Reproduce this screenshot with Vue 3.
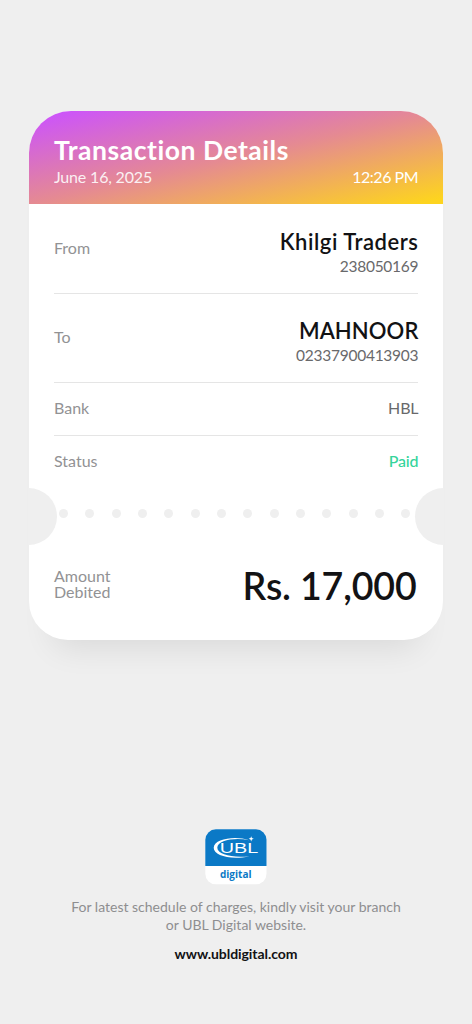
<script setup>
const parties = [
  { label: 'From', name: 'Khilgi Traders', account: '238050169', key: 'from' },
  { label: 'To', name: 'MAHNOOR', account: '02337900413903', key: 'to' },
]
const dots = 14
</script>

<template>
  <main class="page">
    <section class="ticket">
      <header class="head">
        <h1>Transaction Details</h1>
        <div class="when"><span class="date">June 16, 2025</span><span class="time">12:26 PM</span></div>
      </header>
      <div class="rows">
        <div v-for="p in parties" :key="p.key" class="party" :class="p.key">
          <span class="label">{{ p.label }}</span>
          <div class="who">
            <strong>{{ p.name }}</strong>
            <span class="account">{{ p.account }}</span>
          </div>
        </div>
        <div class="line bank"><span class="label">Bank</span><span class="value">HBL</span></div>
        <div class="line status"><span class="label">Status</span><span class="value paid">Paid</span></div>
      </div>
      <div class="tear">
        <i class="notch left"></i>
        <i v-for="n in dots" :key="n" class="dot"></i>
        <i class="notch right"></i>
      </div>
      <div class="total">
        <span class="label">Amount<br />Debited</span>
        <strong>Rs. 17,000</strong>
      </div>
    </section>

    <footer class="foot">
      <svg class="logo" viewBox="0 0 62 56" width="62" height="56">
        <defs>
          <clipPath id="tile"><rect x="0.3" y="0.3" width="61.2" height="55" rx="10.5" /></clipPath>
        </defs>
        <g clip-path="url(#tile)">
          <rect width="62" height="56" fill="#fff" />
          <rect width="62" height="37" fill="#0b79c6" />
        </g>
        <path d="M44 11.2C31 6.6 9 9.5 8.7 18.8C8.5 26.5 26 31.5 44.5 27.2C28 29.2 12.4 25.6 12.3 18.8C12.3 11.2 30 8.3 44 11.2Z" fill="#fff" />
        <path d="M46.2 7.2L46.9 9.1L48.8 9.8L46.9 10.5L46.2 12.4L45.5 10.5L43.6 9.8L45.5 9.1Z" fill="#fff" />
        <text x="14.8" y="24.4" class="ubl" textLength="38.5" lengthAdjust="spacingAndGlyphs">UBL</text>
        <text x="15" y="49.3" class="digital" textLength="31.5" lengthAdjust="spacingAndGlyphs">digital</text>
      </svg>
      <p class="note">For latest schedule of charges, kindly visit your branch<br />or UBL Digital website.</p>
      <p class="site">www.ubldigital.com</p>
    </footer>
  </main>
</template>

<style>
html,
body {
  background: #efefef;
}
</style>

<style scoped>
.page {
  box-sizing: border-box;
  width: 472px;
  height: 1024px;
  padding: 110.5px 29px 0;
  overflow: hidden;
  background: #efefef;
  font-family: Lato, 'Noto Sans', sans-serif;
  color: #121214;
}
.ticket {
  width: 414px;
  height: 529px;
  display: flex;
  flex-direction: column;
  background: #fff;
  border-radius: 42px 42px 39px 39px;
  box-shadow: 0 32px 32px -24px rgba(0, 0, 0, 0.09);
}
.head {
  box-sizing: border-box;
  height: 93.5px;
  padding: 24px 25px 0;
  border-radius: 42px 42px 0 0;
  color: #fff;
  background: linear-gradient(to bottom right, #cc54fa 4%, #e58a92 50%, #fdd41f 97%);
}
h1 {
  margin: 0;
  font-size: 26.5px;
  line-height: 30px;
  font-weight: 700;
  letter-spacing: 0.54px;
}
.when {
  display: flex;
  justify-content: space-between;
  font-size: 16px;
  line-height: 22px;
  margin-top: 1px;
}
.date {
  opacity: 0.88;
  letter-spacing: -0.18px;
}
.time {
  letter-spacing: -0.5px;
}
.rows {
  margin: 0 25px;
}
.party,
.line {
  box-sizing: border-box;
  display: flex;
  justify-content: space-between;
  border-bottom: 1px solid #e5e5e5;
}
.party {
  align-items: flex-start;
}
.party.from {
  height: 90px;
}
.party.to {
  height: 89px;
}
.label {
  font-size: 16px;
  line-height: 16px;
  color: #929294;
}
.party .label {
  padding-top: 36px;
}
.party.to .label {
  padding-top: 35px;
}
.who {
  display: flex;
  flex-direction: column;
  align-items: flex-end;
  padding-top: 25px;
}
.to .who {
  padding-top: 24.4px;
}
.who strong {
  font-size: 22px;
  line-height: 26px;
  font-weight: 600;
}
.from strong {
  letter-spacing: 0.53px;
  margin-right: -0.5px;
}
.to strong {
  letter-spacing: 0.1px;
  margin-right: -0.5px;
}
.account {
  font-size: 15.5px;
  line-height: 22px;
  letter-spacing: -0.26px;
  margin-right: -0.3px;
  color: #69696b;
}
.line {
  height: 53px;
  align-items: center;
  padding-bottom: 2px;
}
.value {
  font-size: 16px;
  line-height: 16px;
  letter-spacing: -0.2px;
  margin-right: -0.3px;
  color: #69696b;
}
.status {
  height: 52px;
  border-bottom: 0;
}
.value.paid {
  color: #35d49b;
  font-weight: 500;
}
.tear {
  position: relative;
  height: 57px;
  display: flex;
  justify-content: space-between;
  padding: 20.5px 32.5px 0 30px;
  box-sizing: border-box;
}
.dot {
  width: 9px;
  height: 9px;
  border-radius: 50%;
  background: #efefef;
}
.notch {
  position: absolute;
  top: 0;
  width: 29px;
  height: 57px;
  background: #efefef;
}
.left {
  left: -1px;
  border-radius: 0 28.5px 28.5px 0;
}
.right {
  right: -1px;
  border-radius: 28.5px 0 0 28.5px;
}
.total {
  display: flex;
  justify-content: space-between;
  align-items: center;
  height: 79px;
  padding: 0 26.5px 0 25px;
}
.total .label {
  padding-bottom: 1px;
}
.total strong {
  font-size: 37.5px;
  line-height: 44px;
  font-weight: 600;
  letter-spacing: -0.15px;
  padding-top: 2px;
}
.foot {
  margin-top: 189.5px;
  display: flex;
  flex-direction: column;
  align-items: center;
  text-align: center;
}
.logo {
  display: block;
}
.ubl {
  font: 400 15.5px 'Liberation Sans', sans-serif;
  fill: #fff;
}
.digital {
  font: 700 11px 'Open Sans', sans-serif;
  fill: #0b79c6;
}
.note {
  margin: 13px 0 0;
  font-size: 14px;
  line-height: 17.5px;
  color: #8e8e90;
}
.site {
  margin: 12px 0 0;
  font-size: 14px;
  line-height: 18px;
  font-weight: 700;
  letter-spacing: -0.06px;
}
</style>
